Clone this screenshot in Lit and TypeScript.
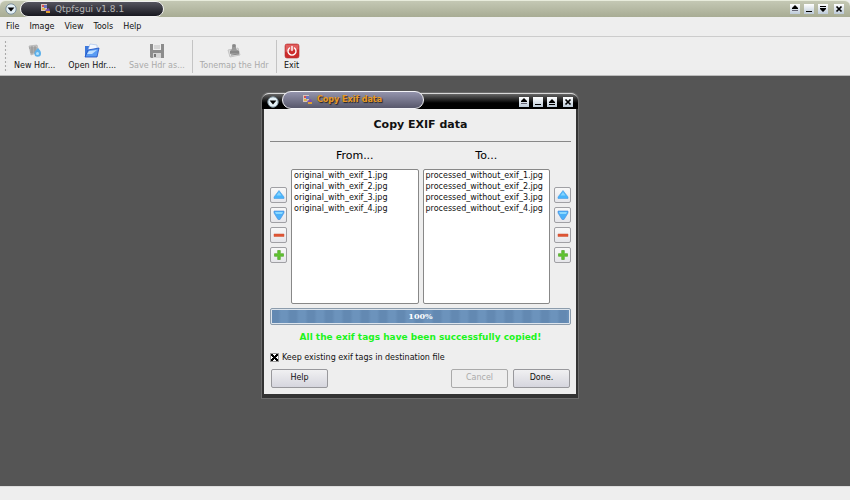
import { LitElement, html, svg, css } from "lit";
import { customElement, property, state } from "lit/decorators.js";

const caretIcon = html`<svg viewBox="0 0 12 12" width="12" height="12">
  <circle cx="6" cy="6" r="5.2" fill="#e4f0f6" stroke="#7c909c" stroke-width="1" />
  <path d="M2.600 4.400h6.800L6 8.400z" fill="#000" />
</svg>`;

const appIcon = html`<svg viewBox="0 0 10 10" width="10" height="10">
  <rect x="0" y="0" width="6" height="7" fill="#d8c4b8" />
  <rect x="1" y="1" width="2" height="2" fill="#d95050" />
  <rect x="3" y="1" width="3" height="3" fill="#6a74c0" />
  <rect x="1" y="4" width="3" height="2" fill="#d8b44c" />
  <path d="M4 6l4-2 1 3-3 2z" fill="#7a4eb0" />
  <path d="M5 7h4v2H5z" fill="#e0a030" />
</svg>`;

const windowGlyphs: Record<string, unknown> = {
  shade: svg`<path d="M5 1l3 3v1H2V4z"/><path d="M2 6h6v1H2z" fill="#667"/>`,
  minimize: svg`<path d="M2 7h6v1H2z"/>`,
  restore: svg`<path d="M2 2h6v1H2zM2 4h6v1L5 8 2 5z"/>`,
  maximize: svg`<path d="M5 2l3 3v1H2V5zM2 7h6v1H2z"/>`,
  close: svg`<path d="M2.500 2.500l5 5M7.500 2.500l-5 5" stroke="#000" stroke-width="1.700"/>`,
};

const toolIcons: Record<string, unknown> = {
  new: svg`<path d="M2 3l8-1 2 7-8 3z" fill="#c4c4c4" stroke="#aaa" stroke-width=".6"/>
    <path d="M2 5h8M3 7h9M3 9h8M5 3v8M8 3v8" stroke="#888" stroke-width=".7"/>
    <path d="M11 5c2 2 3 3.500 3 5.500a3.300 3.300 0 0 1-6.600 0C7.400 8.500 9 7 11 5z" fill="#5cb0ea"/>
    <circle cx="10.500" cy="10.500" r="1.500" fill="#b4e0fa"/>`,
  open: svg`<path d="M1 3l5 0 1-1 6 0v12H1z" fill="#3c78dc"/>
    <path d="M6 1l7 1v5H4z" fill="#f4f8ff" stroke="#8cb0e8" stroke-width=".5"/>
    <path d="M4 7l11-2-2 9H1z" fill="#5a9cf4" stroke="#1c4cc0" stroke-width=".8"/>
    <path d="M5 8l8-1-5 4H3z" fill="#c0e0ff"/>`,
  save: svg`<path d="M1 1h14v14H2l-1-1z" fill="#8c8c8c"/>
    <path d="M4 1h8v6H4z" fill="#efefef"/><path d="M5 3h6M5 5h6" stroke="#bbb"/>
    <path d="M4 10h8v5H4z" fill="#d4d4d4"/><path d="M5 11h2v3H5z" fill="#777"/>`,
  tonemap: svg`<path d="M2 7l10-2 2 7-10 2z" fill="#ddd" stroke="#bbb" stroke-width=".8"/>
    <path d="M6 2l1-1h2l1 1v4l3 2v3H4V8l2-2z" fill="#999"/><path d="M4 9h9M7 3h2" stroke="#777"/>
    <path d="M5 12l8-1" stroke="#888"/>`,
  exit: svg`<rect x="1" y="1" width="14" height="14" rx="2" fill="#cc2c2c" stroke="#b03030" stroke-width=".6"/>
    <path d="M1.500 1.500h13v5Q8 6 1.500 9z" fill="#ec8080" opacity=".6"/>
    <path d="M5.500 5a4 4 0 1 0 5 0" fill="none" stroke="#fff" stroke-width="1.400" stroke-linecap="round"/>
    <path d="M8 3.500v4" stroke="#fff" stroke-width="1.400" stroke-linecap="round"/>`,
};

const listGlyphs: Record<string, unknown> = {
  up: svg`<path d="M6 1.500L11 8v1.500H1V8z" fill="#48b4fa" stroke="#4c9ce4" stroke-width=".6"/>
    <path d="M6 3L8.500 6.500h-5z" fill="#84d4ff"/>`,
  down: svg`<path d="M1 2h10v2L7 10.500H5L1 4z" fill="#4cb0f8" stroke="#4c8cdc" stroke-width=".6"/>
    <path d="M2 3h8L9 5H3z" fill="#8cd8ff"/>`,
  remove: svg`<path d="M1 5h10v2.500H1z" fill="#e05434" stroke="#cc5434" stroke-width=".5"/>`,
  add: svg`<path d="M4.700 1.500h2.600v3.200h3.200v2.600H7.300v3.200H4.700V7.300H1.500V4.700h3.200z" fill="#60c430" stroke="#58a830" stroke-width=".7"/>`,
};

@customElement("window-controls")
class WindowControls extends LitElement {
  @property({ attribute: false }) kinds: string[] = [];

  static styles = css`
    :host { display: flex; gap: 4px; }
    .control {
      width: 10px; height: 10px; padding: 0; border: 0; display: flex;
      background: linear-gradient(#fff, #bccad8);
    }
    .control:last-child { margin-left: 2px; }
  `;

  render() {
    return this.kinds.map(
      (k) => html`<button class="control" aria-label=${k}>
        <svg viewBox="0 0 10 10" width="10" height="10">${windowGlyphs[k]}</svg>
      </button>`
    );
  }
}

@customElement("order-buttons")
class OrderButtons extends LitElement {
  static styles = css`
    :host { display: flex; flex-direction: column; gap: 4px; padding-top: 18px; }
    .order {
      width: 17px; height: 16px; padding: 0; display: flex; align-items: center; justify-content: center;
      border: 1px solid #a0a0a4; border-radius: 2px; background: linear-gradient(#f8f8f8, #e6e6ea);
    }
  `;

  render() {
    return Object.keys(listGlyphs).map(
      (k) => html`<button class="order" aria-label=${k}>
        <svg viewBox="0 0 12 12" width="12" height="12">${listGlyphs[k]}</svg>
      </button>`
    );
  }
}

@customElement("exif-dialog")
class ExifDialog extends LitElement {
  @state() private progress = 100;

  static styles = css`
    :host {
      display: block; box-sizing: border-box; width: 316px; color: #111;
      background: #eee; border: solid #333; border-width: 0 2px 4px;
      border-radius: 7px 7px 0 0; box-shadow: 0 0 0 1px #6c6c6c;
    }
    .titlebar {
      height: 16px; display: flex; align-items: center; padding: 0 5px 0 3px; margin: 0 -2px;
      border-top: 1px solid #d8d8d8; border-radius: 7px 7px 0 0; box-sizing: border-box;
      background: linear-gradient(#666, #000 60%);
    }
    .menu { padding: 0; border: 0; background: none; display: flex; margin: 0 2px; }
    .caption {
      box-sizing: border-box; width: 142px; height: 18px; margin: -4px auto 0 1px; padding-left: 20px;
      display: flex; align-items: center; gap: 4px; border: 1px solid #f4f4f8; border-radius: 9px;
      background: linear-gradient(#9494ac, #58586c); color: #e89820; font-size: 8px; font-weight: bold;
      text-shadow: 1px 1px 1px #222;
    }
    .body { padding: 0 5px 6px 6px; }
    .title {
      margin: 0; height: 32px; line-height: 32px; text-align: center; font-size: 11px; font-weight: bold;
      border-bottom: 1px solid #888;
    }
    .lists { display: grid; grid-template-columns: 17px 1fr 1fr 17px; column-gap: 4px; }
    .heading {
      margin: 0; height: 27px; line-height: 27px; font-size: 11px; font-weight: 500; text-align: center; color: #000;
    }
    .first { grid-column: 2; }
    .second { grid-column: 3; }
    .list {
      grid-row: 2; margin: 0; padding: 0 2px; list-style: none; box-sizing: border-box; height: 135px; min-width: 0;
      border: 1px solid #888; border-radius: 2px; background: #fff; line-height: 11px; white-space: nowrap;
    }
    .left { grid-area: 2 / 1; }
    .right { grid-area: 2 / 4; }
    .bar {
      margin-top: 4px; height: 17px; box-sizing: border-box; padding: 1px; display: grid;
      border: 1px solid #8c9cac; border-radius: 2px; background: #dce4ec;
    }
    .fill {
      grid-area: 1 / 1;
      background: repeating-linear-gradient(90deg, #6389b2 0 6px, #6c93bc 9px 15px, #6389b2 18px);
    }
    .percent {
      grid-area: 1 / 1; z-index: 1; text-align: center; color: #fff; line-height: 13px;
      font-family: "DejaVu Serif", serif; font-weight: bold;
    }
    .message { margin: 0; height: 24px; line-height: 24px; text-align: center; color: #1cf41c; font-size: 9px; font-weight: bold; }
    .keep { display: flex; align-items: center; gap: 3px; height: 17px; }
    .check {
      appearance: none; width: 9px; height: 9px; margin: 0; display: grid; place-items: center;
      border: 1px solid #999; background: #fff;
    }
    .check:checked::before {
      content: ""; width: 7px; height: 7px;
      background: linear-gradient(45deg, transparent 36%, #000 36% 64%, transparent 64%),
        linear-gradient(-45deg, transparent 36%, #000 36% 64%, transparent 64%);
    }
    .actions { display: flex; gap: 5px; margin-top: 3px; padding: 0 1px; }
    .action {
      width: 57px; height: 19px; padding: 0 0 2px; border: 1px solid #98989c; border-radius: 2px;
      background: linear-gradient(#f0f0f2, #d6d6de); font: inherit; color: #111;
    }
    .action:disabled { color: #aaa; border-color: #aaa; background: #eee; }
    .help { margin-right: auto; }
  `;

  private files(prefix: string) {
    return [1, 2, 3, 4].map((n) => html`<li role="option">${prefix}_exif_${n}.jpg</li>`);
  }

  render() {
    return html`
      <header class="titlebar">
        <button class="menu" aria-label="Window menu">${caretIcon}</button>
        <div class="caption">${appIcon}<span>Copy Exif data</span></div>
        <window-controls .kinds=${["shade", "minimize", "maximize", "close"]}></window-controls>
      </header>
      <div class="body">
        <h1 class="title">Copy EXIF data</h1>
        <div class="lists">
          <h2 class="heading first" id="from">From...</h2>
          <h2 class="heading second" id="to">To...</h2>
          <order-buttons class="left"></order-buttons>
          <ul class="list first" role="listbox" aria-labelledby="from">${this.files("original_with")}</ul>
          <ul class="list second" role="listbox" aria-labelledby="to">${this.files("processed_without")}</ul>
          <order-buttons class="right"></order-buttons>
        </div>
        <div class="bar" role="progressbar" aria-valuenow=${this.progress}>
          <div class="fill" style="width:${this.progress}%"></div>
          <span class="percent">${this.progress}%</span>
        </div>
        <p class="message">All the exif tags have been successfully copied!</p>
        <label class="keep"><input class="check" type="checkbox" checked />Keep existing exif tags in destination file</label>
        <div class="actions">
          <button class="action help">Help</button>
          <button class="action" disabled>Cancel</button>
          <button class="action">Done.</button>
        </div>
      </div>
    `;
  }
}

@customElement("app-root")
class AppRoot extends LitElement {
  static styles = css`
    :host {
      display: flex; flex-direction: column; min-height: 100vh; background: #eee; color: #111;
      font: 8px "DejaVu Sans", sans-serif;
    }
    .titlebar {
      height: 17px; box-sizing: border-box; display: flex; align-items: center; padding: 0 6px 0 5px;
      border-top: 1px solid #e8ecdc; border-radius: 6px 6px 0 0;
      background: linear-gradient(#c4c8b4, #a8ac94);
    }
    .winmenu { padding: 0; border: 0; background: none; display: flex; }
    .caption {
      box-sizing: border-box; width: 144px; height: 16px; margin: 0 auto 0 3px; padding-left: 20px;
      display: flex; align-items: center; gap: 4px; border: 1px solid #f0f0f0; border-radius: 8px;
      background: linear-gradient(#55555f, #181820); color: #b4b4b4; font-size: 9px;
    }
    .menubar { display: flex; gap: 10px; height: 19px; padding: 0 6px; border-bottom: 1px solid #ccc; }
    .menuitem { padding: 0; border: 0; background: none; font: inherit; color: inherit; }
    .toolbar {
      display: flex; gap: 13px; height: 39px; box-sizing: border-box; padding: 3px 4px 2px;
      border-bottom: 1px solid #bbb;
    }
    .grip { width: 4px; margin-right: -7px; background: radial-gradient(circle, #aaa 40%, transparent 45%) 0 0 / 3px 4px; }
    .tool {
      padding: 3px 0 0; border: 0; background: none; font: inherit; color: inherit; white-space: nowrap;
      display: flex; flex-direction: column; align-items: center; gap: 2px;
    }
    .tool:disabled { color: #aaa; }
    .divider { width: 1px; margin: 0 -6px; background: #c4c4c4; }
    .workspace { flex: 1; position: relative; min-height: 330px; background: #555; }
    .dialog { position: absolute; left: 262px; top: 17px; }
    .status { height: 13px; border-top: 1px solid #ddd; }
  `;

  private tool(icon: string, label: string, disabled = false) {
    return html`<button class="tool" ?disabled=${disabled}>
      <svg viewBox="0 0 16 16" width="16" height="16">${toolIcons[icon]}</svg>
      <span>${label}</span>
    </button>`;
  }

  render() {
    return html`
      <header class="titlebar">
        <button class="winmenu" aria-label="Window menu">${caretIcon}</button>
        <div class="caption">${appIcon}<span>Qtpfsgui v1.8.1</span></div>
        <window-controls .kinds=${["shade", "minimize", "restore", "close"]}></window-controls>
      </header>
      <nav class="menubar">
        ${["File", "Image", "View", "Tools", "Help"].map((m) => html`<button class="menuitem">${m}</button>`)}
      </nav>
      <div class="toolbar" role="toolbar">
        <div class="grip"></div>
        ${this.tool("new", "New Hdr...")} ${this.tool("open", "Open Hdr....")}
        ${this.tool("save", "Save Hdr as...", true)}
        <div class="divider"></div>
        ${this.tool("tonemap", "Tonemap the Hdr", true)}
        <div class="divider"></div>
        ${this.tool("exit", "Exit")}
      </div>
      <main class="workspace"><exif-dialog class="dialog"></exif-dialog></main>
      <footer class="status"></footer>
    `;
  }
}
